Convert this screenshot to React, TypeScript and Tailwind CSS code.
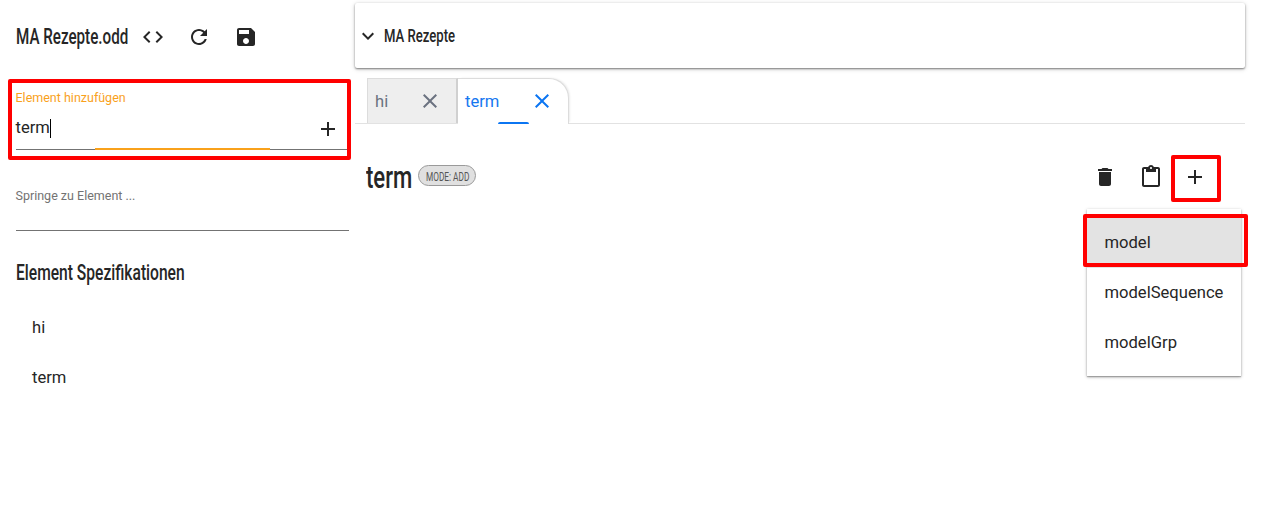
import type { ReactNode } from "react";

const paths = {
  code: "M9.4 16.6L4.8 12l4.6-4.6L8 6l-6 6 6 6 1.4-1.4zm5.2 0l4.6-4.6-4.6-4.6L16 6l6 6-6 6-1.4-1.4z",
  refresh:
    "M17.65 6.35C16.2 4.9 14.21 4 12 4c-4.42 0-7.99 3.58-7.99 8s3.57 8 7.99 8c3.73 0 6.84-2.55 7.73-6h-2.08c-.82 2.33-3.04 4-5.65 4-3.31 0-6-2.69-6-6s2.69-6 6-6c1.66 0 3.14.69 4.22 1.78L13 11h7V4l-2.35 2.35z",
  save: "M17 3H5c-1.11 0-2 .9-2 2v14c0 1.1.89 2 2 2h14c1.1 0 2-.9 2-2V7l-4-4zm-5 16c-1.66 0-3-1.34-3-3s1.34-3 3-3 3 1.34 3 3-1.34 3-3 3zm3-10H5V5h10v4z",
  add: "M19 13h-6v6h-2v-6H5v-2h6V5h2v6h6v2z",
  close:
    "M19 6.41L17.59 5 12 10.59 6.41 5 5 6.41 10.59 12 5 17.59 6.41 19 12 13.41 17.59 19 19 17.59 13.41 12z",
  expand: "M16.59 8.59L12 13.17 7.41 8.59 6 10l6 6 6-6z",
  trash: "M6 19c0 1.1.9 2 2 2h8c1.1 0 2-.9 2-2V7H6v12zM19 4h-3.5l-1-1h-5l-1 1H5v2h14V4z",
  paste:
    "M19 2h-4.18C14.4.84 13.3 0 12 0c-1.3 0-2.4.84-2.82 2H5c-1.1 0-2 .9-2 2v16c0 1.1.9 2 2 2h14c1.1 0 2-.9 2-2V4c0-1.1-.9-2-2-2zm-7 0c.55 0 1 .45 1 1s-.45 1-1 1-1-.45-1-1 .45-1 1-1zm7 18H5V4h2v3h10V4h2v16z",
};

function Icon({ name, className = "" }: { name: keyof typeof paths; className?: string }) {
  return (
    <svg viewBox="0 0 24 24" className={`size-6 shrink-0 fill-current ${className}`}>
      <path d={paths[name]} />
    </svg>
  );
}

/* Narrow heading face: Roboto squeezed horizontally inside a box of fixed width. */
function Condensed({ box, text, children }: { box: string; text: string; children: ReactNode }) {
  return (
    <span className={`block shrink-0 ${box}`}>
      <span className={`block w-max origin-left whitespace-nowrap ${text}`}>{children}</span>
    </span>
  );
}

function Sidebar() {
  return (
    <aside className="flex w-[355px] shrink-0 flex-col pl-[15.5px]">
      <header className="flex h-[74px] items-center">
        <Condensed box="mb-[2px] w-[112px]" text="scale-x-[0.69] text-[22px] font-medium">
          MA Rezepte.odd
        </Condensed>
        <Icon name="code" className="ml-[13.5px]" />
        <Icon name="refresh" className="ml-[22px]" />
        <Icon name="save" className="ml-[22.5px]" />
      </header>

      <div className="relative flex h-[76px] w-[333px] flex-col border-b border-[#737373] pt-[14px]">
        <label className="text-[12.5px] leading-5 text-[#f9a11b]">Element hinzufügen</label>
        <div className="flex h-10 items-center justify-between pr-[9px]">
          <span className="flex items-center text-[16.6px] leading-5">
            term<span className="h-[19px] w-px bg-black" />
          </span>
          <Icon name="add" className="mt-[2px]" />
        </div>
        <div className="absolute -bottom-px left-[79px] h-[2px] w-[175px] bg-[#f9a11b]" />
        <div className="absolute -left-[7.5px] top-[5px] h-[81px] w-[343px] rounded-[2px] border-4 border-[#ff0000]" />
      </div>

      <div className="mt-9 h-[45px] w-[333px] border-b border-[#737373] text-[12.5px] leading-5 text-[#737373]">
        Springe zu Element ...
      </div>

      <div className="mt-[26px] flex h-[30px] items-center">
        <Condensed box="w-[169px]" text="scale-x-[0.709] text-[22px] font-medium">
          Element Spezifikationen
        </Condensed>
      </div>
      <ul className="mt-4 pl-[16.5px] text-[16.6px] leading-6">
        <li className="flex h-[50px] items-center">hi</li>
        <li className="flex h-[50px] items-center">term</li>
      </ul>
    </aside>
  );
}

function Tabs() {
  return (
    <nav className="mt-[10px] flex h-[46px] border-b border-[#e2e2e2] pl-3 text-[16.6px] leading-6">
      <div className="flex h-[45px] w-[91px] items-center justify-between border-l border-t border-r-2 border-[#dcdcdc] border-r-[#d0d0d0] bg-[#eee] pl-[7px] pr-[14px] text-[#6b7280]">
        <span className="pt-px">hi</span>
        <Icon name="close" />
      </div>
      <div className="relative flex h-[46px] w-[111px] items-center justify-between rounded-tr-[20px] border-r border-t border-[#dcdcdc] bg-white pb-px pl-[7px] pr-[14.5px] text-[#1677f0] shadow-[2px_-1px_2px_-1px_rgba(0,0,0,0.08)]">
        <span className="pt-px">term</span>
        <Icon name="close" className="text-[#0b75f2]" />
        <div className="absolute bottom-0 left-[39.5px] h-[2px] w-[31px] rounded-t-sm bg-[#0b75f2]" />
      </div>
    </nav>
  );
}

function Menu() {
  return (
    <div className="absolute left-[732px] top-[209px] w-[154px] bg-white pb-2 pt-[9px] text-[16.6px] leading-6 shadow-[0_1px_3px_rgba(0,0,0,0.35),0_1px_1px_rgba(0,0,0,0.2)]">
      <div className="relative flex h-[50px] items-center bg-[#e3e3e3] pl-[17.5px]">
        model
        <div className="absolute -left-[4px] -top-[4px] h-[53px] w-[165px] rounded-[2px] border-4 border-[#ff0000]" />
      </div>
      <div className="flex h-[50px] items-center pl-[17.5px]">modelSequence</div>
      <div className="flex h-[50px] items-center pl-[17.5px]">modelGrp</div>
    </div>
  );
}

export default function App() {
  return (
    <div className="flex h-[512px] w-[1264px] overflow-hidden bg-white font-['Roboto',sans-serif] text-[#262626]">
      <Sidebar />
      <main className="relative flex w-[890px] flex-col">
        <section className="mt-[3px] flex h-[65px] items-center rounded-[2px] bg-white pl-px shadow-[0_1px_2px_rgba(0,0,0,0.45),0_1px_5px_rgba(0,0,0,0.18)]">
          <Icon name="expand" />
          <div className="ml-[4px] pt-px">
            <Condensed box="w-[71px]" text="scale-x-[0.69] text-[19px] font-medium">
              MA Rezepte
            </Condensed>
          </div>
        </section>
        <Tabs />
        <div className="mt-[27px] flex h-[52px] items-center pl-[11px]">
          <Condensed box="w-[47px]" text="scale-x-[0.69] text-[32px] font-medium">
            term
          </Condensed>
          <span className="mb-[3px] ml-[5px] flex h-[21px] w-[58px] items-center rounded-full border border-[#9a9a9a] bg-[#e0e0e0] pl-[7px] pt-[2px] text-[#555]">
            <Condensed box="w-[43px]" text="scale-x-[0.69] text-[12px]">
              MODE: ADD
            </Condensed>
          </span>
          <div className="ml-auto flex items-center pr-[38px]">
            <Icon name="trash" className="ml-px" />
            <Icon name="paste" className="ml-[22.5px]" />
            <div className="relative ml-5">
              <Icon name="add" />
              <div className="absolute -left-[12px] -top-[10px] h-[47px] w-[50px] rounded-[2px] border-4 border-[#ff0000]" />
            </div>
          </div>
        </div>
        <Menu />
      </main>
    </div>
  );
}
